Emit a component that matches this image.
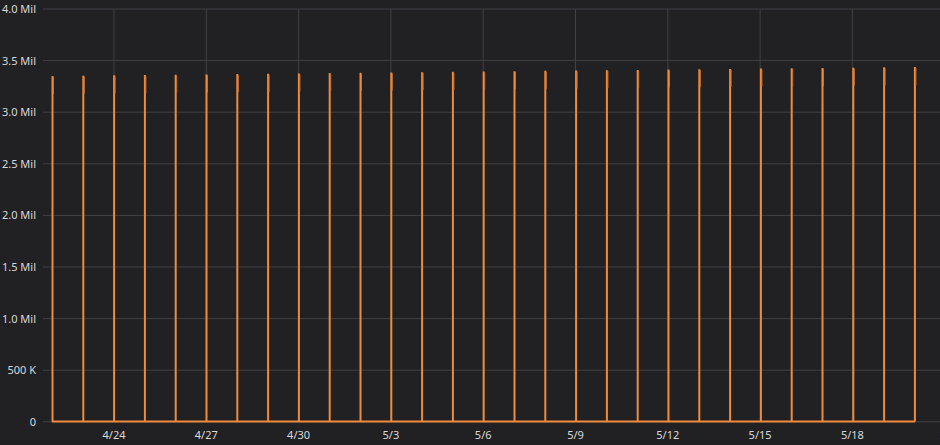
const yLabels = ['4.0 Mil', '3.5 Mil', '3.0 Mil', '2.5 Mil', '2.0 Mil', '1.5 Mil', '1.0 Mil', '500 K', '0'];
const xLabels = ['4/24', '4/27', '4/30', '5/3', '5/6', '5/9', '5/12', '5/15', '5/18', '5/'];
const top = 9;
const step = 51.6;
const base = 421.5;

export default function App() {
  const spikes = Array.from({ length: 29 }, (_, i) => {
    const x = 52.5 + i * 30.8;
    const peak = 76 - (i * 9) / 28;
    return { x, peak };
  });
  return (
    <div className="w-[940px] h-[445px] bg-[#212124] overflow-hidden font-['DejaVu_Sans',sans-serif]">
      <svg width="940" height="445">
        {yLabels.map((l, i) => {
          const y = top + i * step;
          return (
            <g key={l}>
              <line x1={43} x2={940} y1={y} y2={y} stroke="#414144" strokeWidth={1} />
              <text x={36} y={y + 4} textAnchor="end" fontSize={11} fill="#d8d9da">{l}</text>
            </g>
          );
        })}
        {xLabels.map((l, i) => {
          const x = 114 + i * 92.3;
          return (
            <g key={l}>
              {i < 9 && <line x1={x} x2={x} y1={top} y2={422} stroke="#414144" strokeWidth={1} />}
              <text x={x} y={439} textAnchor="middle" fontSize={11} fill="#d8d9da">{l}</text>
            </g>
          );
        })}
        <line x1={52} x2={915} y1={base} y2={base} stroke="#f08a3c" strokeWidth={2} />
        {spikes.map((s, i) => (
          <g key={i}>
            <line x1={s.x} x2={s.x} y1={base} y2={s.peak} stroke="#f08a3c" strokeWidth={2} />
            <line x1={s.x + 1} x2={s.x + 1} y1={s.peak + 1} y2={s.peak + 18} stroke="#c96e2e" strokeWidth={1} />
          </g>
        ))}
      </svg>
    </div>
  );
}
